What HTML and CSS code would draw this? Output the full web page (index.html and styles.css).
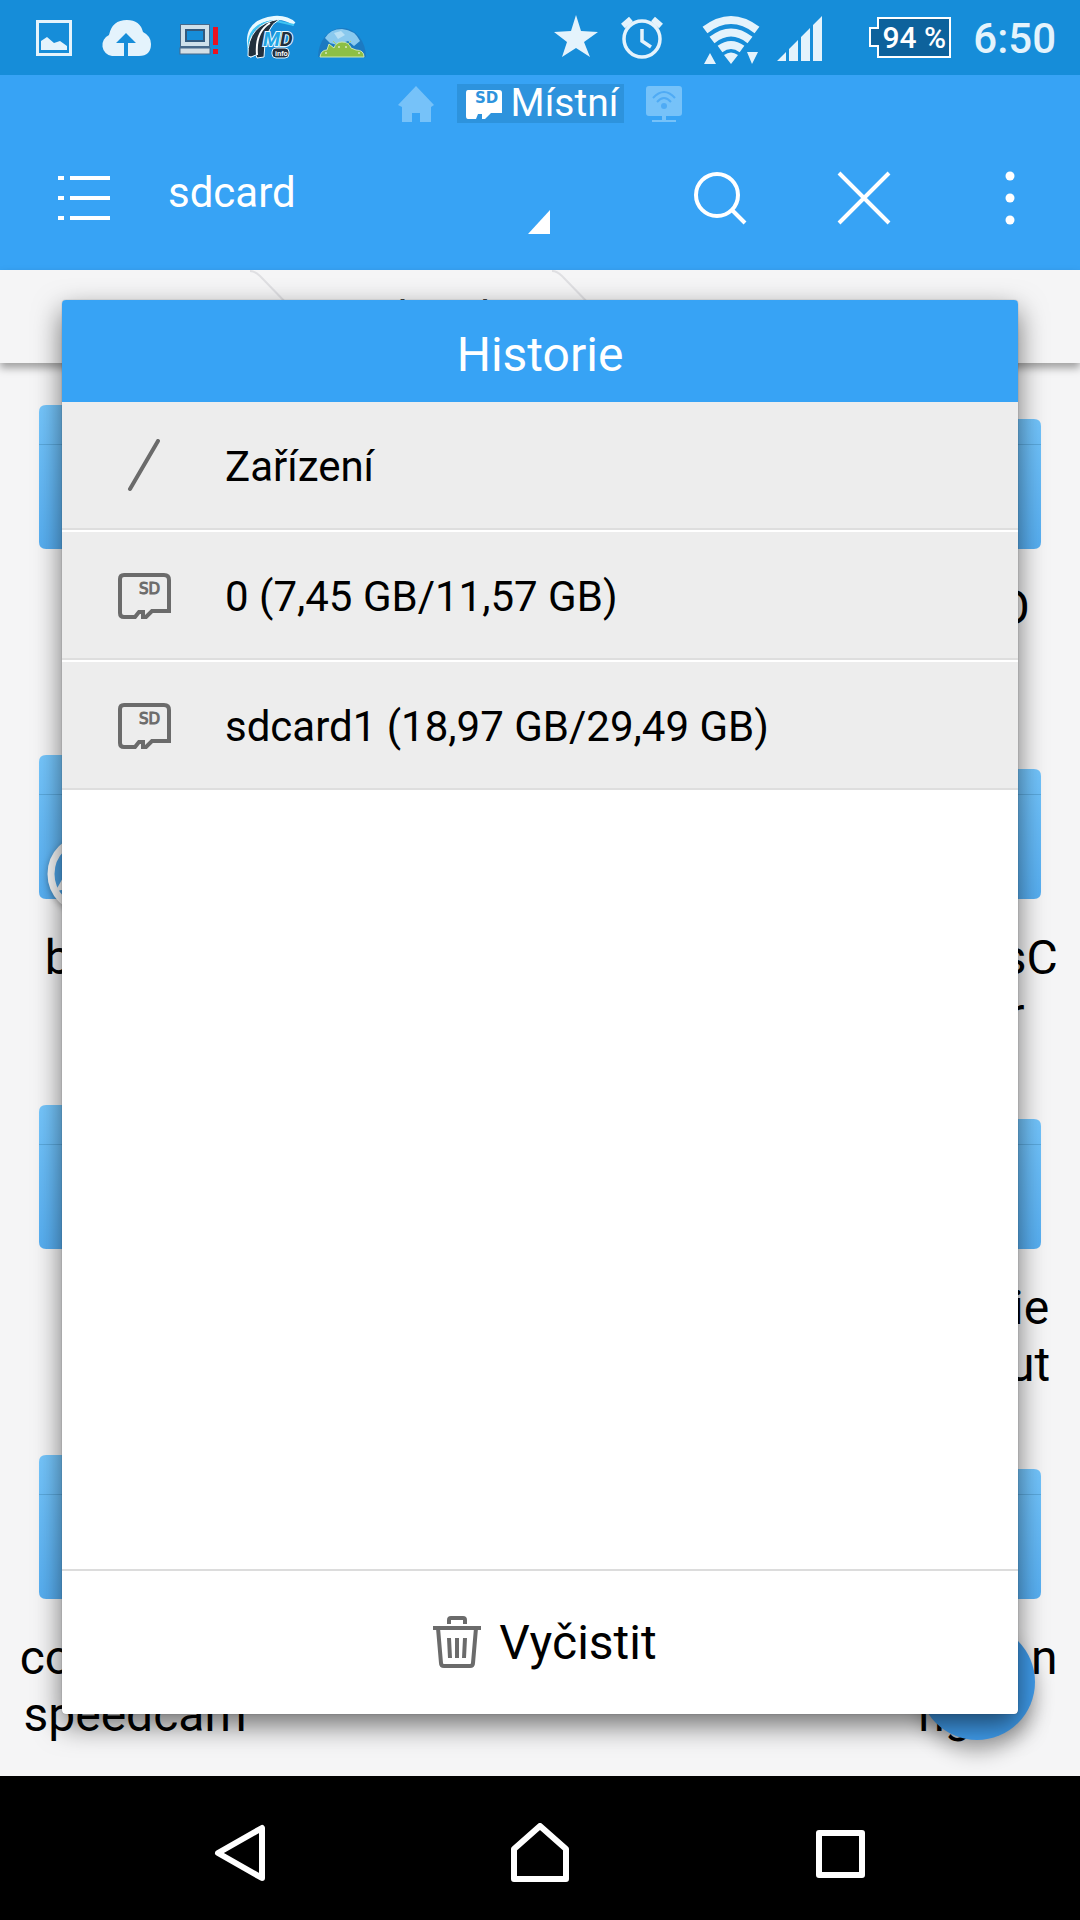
FILE: index.html
```html
<!DOCTYPE html>
<html lang="cs">
<head>
    <meta charset="utf-8">
    <title>Historie</title>
    <link rel="stylesheet" href="styles.css">
</head>
<body>
    <svg width="0" height="0" class="defs">
        <defs>
            <linearGradient id="folderFill" x1="0" y1="0" x2="0" y2="1">
                <stop offset="0" stop-color="#76c7fd"/>
                <stop offset="1" stop-color="#57aff2"/>
            </linearGradient>
            <symbol id="folder" viewBox="0 0 192 144">
                <path d="M7 0H78Q84 0 87 6L91 14H185Q192 14 192 21V137Q192 144 185 144H7Q0 144 0 137V7Q0 0 7 0Z" fill="url(#folderFill)"/>
                <path d="M0 39.5H192" stroke="#5aa8dc"/>
            </symbol>
            <symbol id="sd" viewBox="0 0 54 46">
                <path d="M7 2H47Q52 2 52 7V38H35L29 44H26V39H22L18 44H7Q3 44 3 40V6Q3 2 7 2Z" fill="none" stroke="#6b6b6b" stroke-width="4"/>
                <text x="22" y="21" class="sd-text">SD</text>
            </symbol>
        </defs>
    </svg>

    <div class="screen">
        <header class="status-bar">
            <div class="notifications">
                <svg width="72" height="75" viewBox="18 0 72 75">
                    <rect x="37.500" y="21.500" width="33" height="33" fill="none" stroke="#e4f3fc" stroke-width="3"/>
                    <path d="M41 50V41L47 37L54 43L60 41L67 46V50Z" fill="#e4f3fc"/>
                </svg>
                <svg width="72" height="75" viewBox="90 0 72 75">
                    <path d="M112 56A11 11 0 0 1 109 35Q112 20 127 20Q140 20 143 32Q151 36 151 44Q151 56 139 56H128V43H136L126 33L116 43H124V56Z" fill="#e4f3fc"/>
                </svg>
                <svg width="72" height="75" viewBox="162 0 72 75">
                    <rect x="183" y="27" width="24" height="18" fill="none" stroke="#47698a" stroke-width="6"/>
                    <rect x="183" y="27" width="24" height="17" fill="#168dd9" stroke="#cfe0ea" stroke-width="4"/>
                    <rect x="186" y="30" width="18" height="11" fill="none" stroke="#31597e" stroke-width="2"/>
                    <rect x="180" y="48" width="30" height="6" fill="#d3dfe6" stroke="#47698a" stroke-width="1"/>
                    <path d="M213 27H218V45H213ZM213 49H218V54H213Z" fill="#ea1220"/>
                </svg>
                <svg width="72" height="75" viewBox="234 0 72 75">
                    <path d="M252 57Q240 22 274 18Q287 17 294 24" fill="none" stroke="#e9f9ff" stroke-width="4"/>
                    <path d="M249 53Q245 23 276 21L294 25" fill="none" stroke="#3fc5f3" stroke-width="2"/>
                    <path d="M248 56Q247 24 280 19Q264 27 264 57L257 58L256 55L251 57Z" fill="#22303d" stroke="#eefaff" stroke-width="1"/>
                    <path d="M257 55Q255 32 270 23" fill="none" stroke="#fff" stroke-width="2"/>
                    <text x="263" y="46" class="md-text"><tspan fill="#22a5e4">M</tspan><tspan fill="#22303d">D</tspan></text>
                    <rect x="272" y="48" width="17" height="10" rx="4" fill="#24303e" stroke="#dff2fb" stroke-width="1"/>
                    <text x="275" y="56" class="info-text">info</text>
                </svg>
                <svg width="72" height="75" viewBox="306 0 72 75">
                    <path d="M318 57A24 29 0 0 1 366 57Z" fill="#1c7ac2"/>
                    <path d="M325 38Q330 29 342 29Q355 30 360 41L354 46L348 41L337 45L330 43Z" fill="#8ac9ee"/>
                    <path d="M334 33L341 31L345 35L338 39Z" fill="#b8e0f5"/>
                    <path d="M320 57Q321 50 327 50L329 44L334 48Q336 42 342 42Q349 42 351 48L356 50Q364 50 364 57Z" fill="#8dbf45" stroke="#cce8b0" stroke-width="1"/>
                    <path d="M333 41L336 44M351 41L348 44" stroke="#a8d172" stroke-width="1"/>
                    <path d="M338 47H340M345 47H347M325 53H327M358 53H360" stroke="#fff" stroke-width="1"/>
                </svg>
            </div>
            <div class="system-icons">
                <svg width="66" height="75" viewBox="543 0 66 75">
                    <path d="M576 15L581 31L598 32L584 42L590 57L576 48L562 57L567 42L554 32L571 31Z" fill="#e4f3fc"/>
                </svg>
                <svg width="66" height="75" viewBox="609 0 66 75" fill="none" stroke="#e4f3fc">
                    <circle cx="642" cy="39" r="18" stroke-width="3.500"/>
                    <path d="M642 29V41L651 47" stroke-width="3.500"/>
                    <path d="M623 26L631 19M661 26L653 19" stroke-width="6"/>
                </svg>
                <svg width="100" height="75" viewBox="675 0 100 75">
                    <g fill="none" stroke="#e4f3fc" stroke-width="8">
                        <path d="M705 30Q731 10 757 30"/>
                        <path d="M712 40Q731 25 750 40"/>
                        <path d="M720 49Q731 41 742 49"/>
                    </g>
                    <path d="M724 55Q731 50 738 55L731 64ZM704 64L710 53L716 64ZM747 52H758L752 64Z" fill="#e4f3fc"/>
                </svg>
                <svg width="50" height="75" viewBox="775 0 50 75">
                    <path d="M777 61L786 52V61ZM789 49L798 40V61H789ZM801 37L810 28V61H801ZM813 25L822 16V61H813Z" fill="#e4f3fc"/>
                </svg>
                <div class="battery">
                    <svg width="82" height="42" viewBox="0 0 82 42">
                        <path d="M9 1H81V40H9V29H1V11H9Z" fill="#0d629c" stroke="#fff" stroke-width="2"/>
                    </svg>
                    <span>94 %</span>
                </div>
                <time class="clock">6:50</time>
            </div>
        </header>

        <nav class="app-bar">
            <div class="tabs">
                <button class="tab" aria-label="Domů">
                    <svg width="37" height="38" viewBox="0 0 37 38">
                        <path d="M18 1L36 20L33 22V37H22V28H14V37H4V22L0 20Z" fill="#76c2f9"/>
                    </svg>
                </button>
                <button class="tab active">
                    <svg width="38" height="32" viewBox="0 0 38 32">
                        <path d="M3 2H34Q37 2 37 5V25H26L20 31H17V26H13L11 31H3Q1 31 1 28V5Q1 2 3 2Z" fill="#fff"/>
                        <text x="10" y="15" class="sd-tab-text">SD</text>
                    </svg>
                    Místní
                </button>
                <button class="tab" aria-label="Síť">
                    <svg width="36" height="38" viewBox="0 0 36 38">
                        <path d="M3 1H33Q36 1 36 4V28Q36 31 33 31H20V35H30V37H6V35H16V31H3Q0 31 0 28V4Q0 1 3 1Z" fill="#76c2f9"/>
                        <path d="M7 13Q18 1 29 13M11 17Q18 9 25 17" fill="none" stroke="#4fabf5" stroke-width="2"/>
                        <circle cx="18" cy="21" r="3" fill="#4fabf5"/>
                    </svg>
                </button>
            </div>
            <div class="toolbar">
                <button class="menu-btn" aria-label="Menu">
                    <svg width="52" height="52" viewBox="0 0 52 52">
                        <path d="M0 6H6M12 6H52M0 26H6M12 26H52M0 46H6M12 46H52" stroke="#fff" stroke-width="4"/>
                    </svg>
                </button>
                <label class="location">
                    <select aria-label="Umístění">
                        <option>sdcard</option>
                    </select>
                    <svg width="22" height="24" viewBox="0 0 22 24"><path d="M22 0V24H0Z" fill="#fff"/></svg>
                </label>
                <span class="spacer"></span>
                <button class="tool-btn" aria-label="Hledat">
                    <svg width="54" height="54" viewBox="0 0 54 54" fill="none" stroke="#fff" stroke-width="4">
                        <circle cx="24" cy="24" r="21"/>
                        <path d="M39 39L52 52"/>
                    </svg>
                </button>
                <button class="tool-btn" aria-label="Zavřít">
                    <svg width="54" height="54" viewBox="0 0 54 54" stroke="#fff" stroke-width="4">
                        <path d="M2 2L52 52M52 2L2 52"/>
                    </svg>
                </button>
                <button class="tool-btn" aria-label="Další">
                    <svg width="14" height="54" viewBox="0 0 14 54" fill="#fff">
                        <circle cx="9" cy="5" r="4.500"/>
                        <circle cx="9" cy="27" r="4.500"/>
                        <circle cx="9" cy="49" r="4.500"/>
                    </svg>
                </button>
            </div>
        </nav>

        <div class="breadcrumbs">
            <span class="crumb root">/</span>
            <svg width="50" height="92" viewBox="0 0 50 92"><path d="M0 1Q5 1 10 6L42 39Q49 46 42 53L8 92" fill="none" stroke="#dfdfe2" stroke-width="2"/></svg>
            <span class="crumb">sdcard</span>
            <svg width="50" height="92" viewBox="0 0 50 92"><path d="M0 1Q5 1 10 6L42 39Q49 46 42 53L8 92" fill="none" stroke="#dfdfe2" stroke-width="2"/></svg>
        </div>

        <main class="files">
            <div class="file-row">
                <div class="file">
                    <svg width="192" height="144"><use href="#folder"/></svg>
                    <p>Alarm</p>
                </div>
                <div class="file">
                    <svg width="192" height="144"><use href="#folder"/></svg>
                    <p>BAUDIO</p>
                </div>
            </div>
            <div class="file-row">
                <div class="file">
                    <svg width="192" height="144" class="badged">
                        <use href="#folder"/>
                        <g class="badge">
                            <circle cx="48" cy="119" r="36" fill="#4da3e6" stroke="#f8f8f8" stroke-width="7"/>
                            <path d="M16 137L30 112L48 90V137L22 135Z" fill="#f8f8f8"/>
                        </g>
                    </svg>
                    <p>backups</p>
                </div>
                <div class="file">
                    <svg width="192" height="144"><use href="#folder"/></svg>
                    <p>BusinessC<br>alendar</p>
                </div>
            </div>
            <div class="file-row">
                <div class="file">
                    <svg width="192" height="144"><use href="#folder"/></svg>
                    <p>cache</p>
                </div>
                <div class="file">
                    <svg width="192" height="144"><use href="#folder"/></svg>
                    <p>akademie<br>pm layout</p>
                </div>
            </div>
            <div class="file-row">
                <div class="file">
                    <svg width="192" height="144"><use href="#folder"/></svg>
                    <p>com.board<br>speedcam</p>
                </div>
                <div class="file">
                    <svg width="192" height="144"><use href="#folder"/></svg>
                    <p>com.gps.n<br>ng</p>
                </div>
            </div>
        </main>

        <button class="fab" aria-label="Přidat"></button>

        <div class="overlay">
            <section class="dialog" role="dialog" aria-labelledby="dialogTitle">
                <h1 id="dialogTitle">Historie</h1>
                <ul class="history">
                    <li><button>
                        <svg width="54" height="54" viewBox="0 0 54 54"><path d="M13 50L41 2" stroke="#6b6b6b" stroke-width="4" stroke-linecap="round"/></svg>
                        Zařízení
                    </button></li>
                    <li><button>
                        <svg width="54" height="46"><use href="#sd"/></svg>
                        0 (7,45 GB/11,57 GB)
                    </button></li>
                    <li><button>
                        <svg width="54" height="46"><use href="#sd"/></svg>
                        sdcard1 (18,97 GB/29,49 GB)
                    </button></li>
                </ul>
                <button class="clear-btn">
                    <svg width="48" height="54" viewBox="0 0 48 54" fill="none" stroke="#6b6b6b" stroke-width="4">
                        <path d="M0 12H48"/>
                        <path d="M16 8V4Q16 2 18 2H30Q32 2 32 4V8"/>
                        <path d="M5 12L8 47Q8 50 11 50H37Q40 50 40 47L43 12"/>
                        <path d="M16 22L17 42M24 22V42M32 22L31 42" stroke-width="4"/>
                    </svg>
                    Vyčistit
                </button>
            </section>
        </div>
    </div>

    <footer class="nav-bar">
        <button aria-label="Zpět">
            <svg width="60" height="60" viewBox="0 0 60 60"><path d="M52 5V55L8 30Z"/></svg>
        </button>
        <button aria-label="Domů">
            <svg width="60" height="60" viewBox="0 0 60 60"><path d="M30 3L56 26V56H4V26Z"/></svg>
        </button>
        <button aria-label="Přehled">
            <svg width="60" height="60" viewBox="0 0 60 60"><path d="M9 10H52V52H9Z"/></svg>
        </button>
    </footer>
</body>
</html>
```
FILE: styles.css
```css
* {
    margin: 0;
    padding: 0;
    box-sizing: border-box;
    font-family: Roboto, "Noto Sans", sans-serif;
}

body {
    height: 100vh;
    display: flex;
    flex-direction: column;
    background: #000;
    overflow: hidden;
}

svg {
    display: block;
    flex-shrink: 0;
}

button {
    background: none;
    border: none;
    color: inherit;
    cursor: pointer;
}

.defs {
    position: absolute;
}

.screen {
    position: relative;
    flex: 1;
    min-height: 0;
    overflow: hidden;
    background: #f5f5f6;
}

/* status bar */
.status-bar {
    height: 75px;
    padding: 0 24px 0 18px;
    display: flex;
    justify-content: space-between;
    background: #168dd9;
    color: #e4f3fc;
}

.notifications,
.system-icons {
    display: flex;
    align-items: center;
}

.md-text {
    font: italic bold 20px "Open Sans", sans-serif;
    stroke: #e9f9ff;
    stroke-width: 2px;
    paint-order: stroke;
}

.info-text {
    font: bold 7px "Liberation Sans", sans-serif;
    fill: #fff;
}

.battery {
    position: relative;
    margin: 0 22px 0 44px;
}

.battery span {
    position: absolute;
    inset: 0 0 0 8px;
    text-align: center;
    line-height: 42px;
    font-size: 30px;
    font-weight: 500;
    color: #fff;
}

.clock {
    padding-top: 2px;
    font-size: 42px;
    font-weight: 500;
}

/* app bar */
.app-bar {
    background: #37a3f5;
    color: #fff;
}

.tabs {
    height: 51px;
    padding-top: 9px;
    display: flex;
    justify-content: center;
    align-items: flex-start;
    gap: 22px;
}

.tab {
    height: 39px;
    display: flex;
    align-items: center;
    gap: 8px;
    font-size: 39px;
    line-height: 41px;
}

.tab.active {
    padding: 0 6px 0 8px;
    background: #2d93dd;
}

.sd-tab-text {
    font: bold 15px "DejaVu Sans", sans-serif;
    fill: #2d93dd;
}

.toolbar {
    height: 144px;
    display: flex;
    align-items: stretch;
}

.menu-btn {
    width: 168px;
    display: flex;
    align-items: center;
    justify-content: center;
}

.location {
    position: relative;
    width: 382px;
}

.location select {
    width: 100%;
    height: 132px;
    appearance: none;
    border: none;
    background: none;
    color: #fff;
    font-size: 42px;
}

.location svg {
    position: absolute;
    right: 0;
    bottom: 36px;
}

.spacer {
    flex: 1;
}

.tool-btn {
    width: 144px;
    display: flex;
    align-items: center;
    justify-content: center;
}

/* breadcrumbs */
.breadcrumbs {
    position: relative;
    height: 93px;
    padding-left: 12px;
    display: flex;
    background: #f5f5f6;
    box-shadow: 0 5px 8px rgba(0, 0, 0, 0.35);
    color: #444;
}

.crumb {
    width: 252px;
    text-align: center;
    font-size: 42px;
    line-height: 93px;
}

.crumb.root {
    width: 238px;
}

/* folders */
.files {
    padding-top: 42px;
}

.file-row {
    height: 350px;
    display: flex;
    justify-content: space-between;
}

.file {
    width: 25%;
    display: flex;
    flex-direction: column;
    align-items: center;
    gap: 30px;
    text-align: center;
    white-space: nowrap;
    font-size: 48px;
    line-height: 57px;
    color: #000;
}

.badged {
    overflow: visible;
}

.badge {
    filter: drop-shadow(0 2px 3px rgba(0, 0, 0, 0.3));
}

.fab {
    position: absolute;
    right: 45px;
    bottom: 36px;
    width: 116px;
    height: 116px;
    border-radius: 50%;
    background: #3f9bea;
    box-shadow: 0 12px 20px rgba(0, 0, 0, 0.3);
}

/* dialog */
.overlay {
    position: absolute;
    inset: 0;
    padding: 300px 62px 62px;
    display: flex;
}

.dialog {
    flex: 1;
    display: flex;
    flex-direction: column;
    background: #fff;
    border-radius: 4px;
    box-shadow: 0 0 1px rgba(0, 0, 0, 0.5), 0 11px 28px rgba(0, 0, 0, 0.55);
    overflow: hidden;
}

.dialog h1 {
    background: #37a3f5;
    color: #fff;
    text-align: center;
    font-size: 48px;
    font-weight: 400;
    line-height: 102px;
    height: 102px;
    padding-top: 4px;
}

.history {
    flex: 1;
    list-style: none;
}

.history li {
    height: 130px;
    border-bottom: 2px solid #fff;
}

.history button {
    width: 100%;
    height: 128px;
    padding: 2px 0 0 55px;
    display: flex;
    align-items: center;
    gap: 54px;
    background: #ededed;
    border-bottom: 2px solid #dedede;
    font-size: 42px;
    color: #000;
}

.sd-text {
    font: 15px "DejaVu Sans", sans-serif;
    fill: #6b6b6b;
    stroke: #6b6b6b;
    stroke-width: 1px;
}

.clear-btn {
    height: 145px;
    padding-left: 10px;
    display: flex;
    align-items: center;
    justify-content: center;
    gap: 18px;
    border-top: 2px solid #dcdcdc;
    font-size: 48px;
    color: #000;
}

/* system navigation */
.nav-bar {
    height: 144px;
    padding: 0 90px;
    display: flex;
    background: #000;
}

.nav-bar button {
    flex: 1;
    display: flex;
    align-items: center;
    justify-content: center;
    padding-top: 10px;
}

.nav-bar path {
    fill: none;
    stroke: #fff;
    stroke-width: 6px;
    stroke-linejoin: round;
}
```
